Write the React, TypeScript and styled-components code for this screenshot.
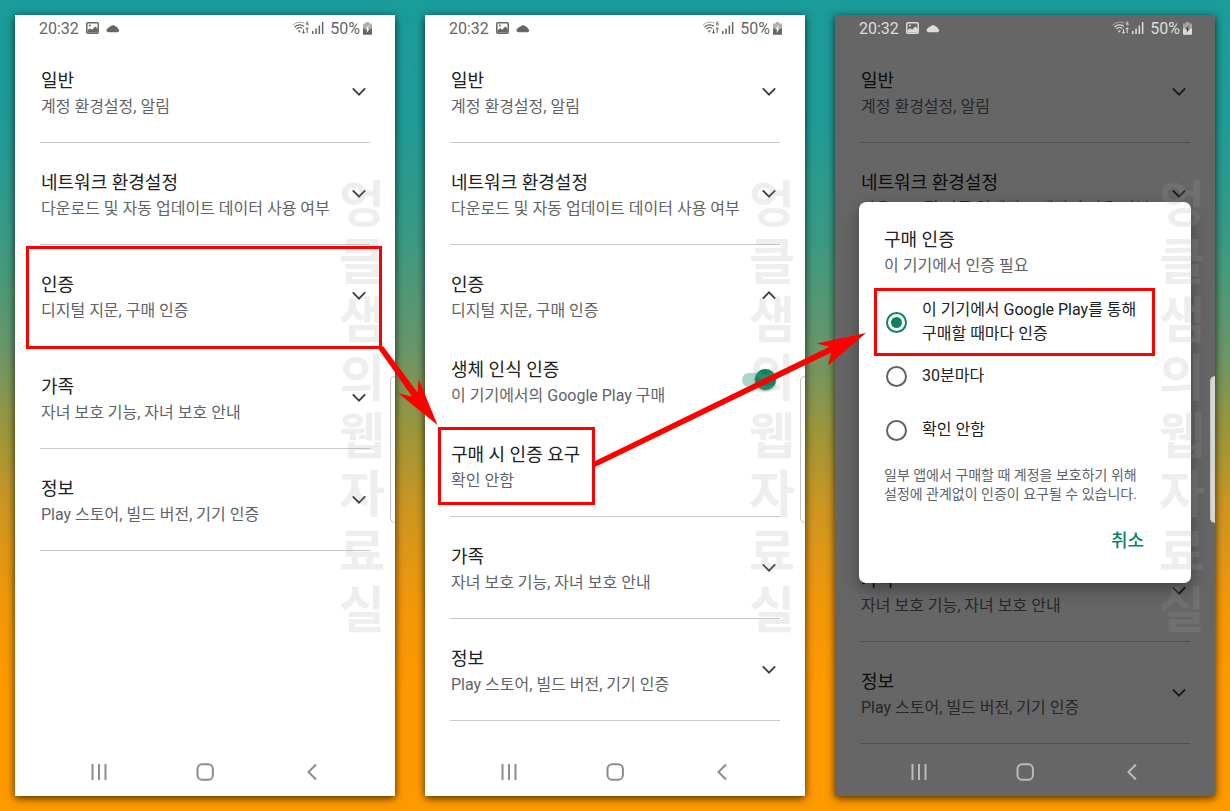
import React, { useState } from "react";
import styled, { createGlobalStyle, css } from "styled-components";

const GlobalStyle = createGlobalStyle`
  *, *::before, *::after { box-sizing: border-box; }
  body {
    margin: 0;
    font-family: Roboto, "Noto Sans CJK KR", sans-serif;
    color: #202124;
  }
  button {
    font: inherit;
    color: inherit;
    background: none;
    border: 0;
    padding: 0;
    text-align: left;
    cursor: pointer;
  }
`;

const Board = styled.main`
  display: grid;
  grid-template-columns: repeat(3, minmax(0, 1fr));
  gap: 30px;
  min-height: 100vh;
  padding: 15px;
  background: linear-gradient(
    #1a9c9b 0%,
    #1f9b98 15%,
    #3c9a82 30%,
    #69966a 43%,
    #9b963c 53%,
    #cb9623 62%,
    #f2970a 74%,
    #ff9900 85%
  );
`;

const Phone = styled.section`
  position: relative;
  display: flex;
  flex-direction: column;
  background: #fff;
  box-shadow: 0 2px 8px rgba(0, 0, 0, 0.75);
`;

const StatusBar = styled.header<{ $light?: boolean }>`
  position: relative;
  z-index: 3;
  display: flex;
  align-items: center;
  justify-content: space-between;
  height: 26px;
  padding: 0 23px 0 24px;
  font-size: 16px;
  color: ${(p) => (p.$light ? "#dcdcdc" : "#666")};
`;

const StatusGroup = styled.div<{ $gap: number }>`
  display: flex;
  align-items: center;
  gap: ${(p) => p.$gap}px;
`;

const List = styled.div`
  flex: 1;
  padding: 0 25px;
`;

const Section = styled.section`
  position: relative;
  padding: 27px 0 22px;
  border-bottom: 1px solid #c8c8c8;
`;

const CoveredSection = styled.div`
  height: 295px;
  border-bottom: 1px solid #c8c8c8;
`;

const row = css`
  display: flex;
  align-items: center;
  justify-content: space-between;
  width: 100%;
  padding-left: 1px;
`;

const SectionHeader = styled.button`
  ${row}
`;

const Item = styled.div`
  ${row}
  margin-top: 33px;
`;

const ItemLabel = styled.label`
  ${row}
  margin-top: 33px;
`;

const Texts = styled.span`
  position: relative;
  display: block;
`;

const Title = styled.span`
  display: block;
  font-size: 18px;
  line-height: 26px;
`;

const Sub = styled.span`
  display: block;
  padding: 1px 0;
  font-size: 16px;
  line-height: 24px;
  color: #5f6368;
`;

const Switch = styled.input`
  appearance: none;
  position: relative;
  flex: none;
  width: 34px;
  height: 14px;
  margin: 0 4px 6px 0;
  border-radius: 7px;
  background: #a9d6c8;

  &::after {
    content: "";
    position: absolute;
    top: -4px;
    right: 0;
    width: 21px;
    height: 21px;
    border-radius: 50%;
    background: #0b8461;
    box-shadow: 0 1px 3px rgba(0, 0, 0, 0.4);
  }
`;

const Frame = styled.span<{ $inset: string }>`
  position: absolute;
  z-index: 10;
  inset: ${(p) => p.$inset};
  border: 3px solid #f00;
  pointer-events: none;
`;

const ArrowDown = styled.svg`
  position: absolute;
  top: calc(100% + 3px);
  left: calc(100% + 3px);
  overflow: visible;
`;

const ArrowUp = styled.svg`
  position: absolute;
  bottom: 50%;
  left: calc(100% + 3px);
  overflow: visible;
`;

const NavBar = styled.nav<{ $light?: boolean }>`
  position: relative;
  z-index: 3;
  display: flex;
  height: 48px;
  padding: 0 31px;
  color: ${(p) => (p.$light ? "#bababa" : "#8c8c8c")};
`;

const NavButton = styled.button`
  flex: 1;
  display: flex;
  align-items: center;
  justify-content: center;
`;

const EdgeHandle = styled.span<{ $solid?: boolean }>`
  position: absolute;
  z-index: 3;
  top: 361px;
  right: 0;
  width: 5px;
  height: 147px;
  border: 1px solid #c4c4c4;
  border-right: 0;
  border-radius: 5px 0 0 5px;
  background: ${(p) => (p.$solid ? "#d6d6d6" : "#fff")};
`;

const Watermark = styled.div`
  position: absolute;
  z-index: 4;
  top: 156px;
  right: 8px;
  width: 50px;
  font-family: "Noto Sans CJK KR", sans-serif;
  font-size: 50px;
  font-weight: 700;
  line-height: 58px;
  text-align: center;
  word-break: break-all;
  color: rgba(158, 158, 158, 0.18);
  pointer-events: none;
`;

const Scrim = styled.div`
  position: absolute;
  z-index: 2;
  inset: 0;
  display: flex;
  align-items: center;
  padding: 0 24px 26px;
  background: rgba(0, 0, 0, 0.6);
`;

const Dialog = styled.form`
  flex: 1;
  padding: 25px 36px 25px 25px;
  border-radius: 7px;
  background: #fff;
  box-shadow: 0 6px 16px rgba(0, 0, 0, 0.35);
  word-break: keep-all;
`;

const Options = styled.fieldset`
  margin: 16px 0 0;
  padding: 0;
  border: 0;
`;

const Option = styled.label`
  position: relative;
  display: flex;
  align-items: center;
  gap: 15px;
  min-height: 54px;
  font-size: 16px;
  line-height: 24px;
`;

const Radio = styled.input`
  appearance: none;
  flex: none;
  display: grid;
  place-items: center;
  width: 21px;
  height: 21px;
  margin: 0 0 0 2px;
  border: 2px solid #5f6368;
  border-radius: 50%;

  &:checked {
    border-color: #0b8461;
  }
  &:checked::after {
    content: "";
    width: 11px;
    height: 11px;
    border-radius: 50%;
    background: #0b8461;
  }
`;

const Note = styled.p`
  margin: 9px 0 20px;
  font-size: 14px;
  line-height: 19px;
  color: #5f6368;
`;

const Actions = styled.div`
  display: flex;
  justify-content: flex-end;
  padding-right: 11px;
`;

const Cancel = styled.button`
  font-size: 18px;
  font-weight: 500;
  line-height: 34px;
  color: #0b8461;
`;

const Chevron = ({ up }: { up?: boolean }) => (
  <svg width="22" height="22" viewBox="0 0 22 22" fill="none" stroke="#3c4043" strokeWidth="1.9" aria-hidden="true">
    <path d={up ? "M4.8 11.6 11 5.4l6.2 6.2" : "M4.8 5.4 11 11.600l6.2-6.2"} />
  </svg>
);

const PictureIcon = () => (
  <svg width="13" height="12" viewBox="0 0 13 12" aria-hidden="true">
    <rect x="0.8" y="0.8" width="11.4" height="10.4" rx="1" fill="none" stroke="currentColor" strokeWidth="1.5" />
    <path d="M1.5 10.5V8.2l2.6-2 2 1.6 3.2-3.4 2.4 2.4v3.7z" fill="currentColor" />
    <circle cx="3.9" cy="3.6" r="1" fill="currentColor" />
  </svg>
);

const CloudIcon = () => (
  <svg width="14" height="9" viewBox="0 0 14 9" aria-hidden="true">
    <path d="M2.2 8.2A2 2 0 0 1 1.900 4.300 2.600 2.600 0 0 1 4 2.700 3.600 3.600 0 0 1 9.800 2.600 3.200 3.200 0 0 1 12 4.800a1.800 1.800 0 0 1-.1 3.400z" fill="currentColor" />
  </svg>
);

const WifiIcon = () => (
  <svg width="18" height="14" viewBox="0 0 18 14" fill="none" stroke="currentColor" aria-hidden="true">
    <path d="M.8 4.400C3.800.9 9 .2 12.600 2.300" strokeWidth="1" opacity=".6" />
    <path d="M2.600 6.200c2.400-2.700 6.600-3 9.400-.9" strokeWidth="1.300" />
    <path d="M4.400 8.100c1.500-1.700 4.200-1.900 6-.5" strokeWidth="1.300" />
    <path d="M5.700 9.600h3.200L7.300 11.800z" fill="currentColor" stroke="none" />
    <path d="M16.300.9h-1.600v3h1.600V2.500h-1.600" strokeWidth=".8" />
    <path d="M11.500 8.300v4M10.200 10.900l1.300 1.400 1.300-1.400M15.200 12V6.700M13.800 8.300l1.400-1.500 1.400 1.500" strokeWidth="1" />
  </svg>
);

const SignalIcon = () => (
  <svg width="12" height="12" viewBox="0 0 12 12" fill="currentColor" aria-hidden="true">
    <path d="M0 9h1.500v3H0zM3.300 6.500h1.500V12H3.300zM6.600 3.500h1.500V12H6.600zM9.900 0h1.500v12H9.900z" />
  </svg>
);

const BatteryIcon = ({ bolt }: { bolt: string }) => (
  <svg width="9" height="13" viewBox="0 0 9 13" fill="currentColor" aria-hidden="true">
    <path d="M2.800 0h3.400v1.500H9V7H0V1.500h2.800z" opacity=".5" />
    <path d="M0 6.500h9V12a.8.8 0 0 1-.8.8H.8A.8.8 0 0 1 0 12z" />
    <path d="M5.800 3.200 2.200 7.600h2L3.400 11l3.500-4.500h-2z" fill={bolt} />
  </svg>
);

const Status = ({ light }: { light?: boolean }) => (
  <StatusBar $light={light}>
    <StatusGroup $gap={7}>
      <span>20:32</span>
      <PictureIcon />
      <CloudIcon />
    </StatusGroup>
    <StatusGroup $gap={2}>
      <WifiIcon />
      <SignalIcon />
      <StatusGroup $gap={3}>
        <span>&nbsp;50%</span>
        <BatteryIcon bolt={light ? "#444" : "#fff"} />
      </StatusGroup>
    </StatusGroup>
  </StatusBar>
);

const Nav = ({ light }: { light?: boolean }) => (
  <NavBar $light={light}>
    <NavButton type="button" aria-label="최근 앱">
      <svg width="18" height="18" viewBox="0 0 18 18" stroke="currentColor" strokeWidth="2" aria-hidden="true">
        <path d="M2.500 1v16M9 1v16M15.500 1v16" />
      </svg>
    </NavButton>
    <NavButton type="button" aria-label="홈">
      <svg width="18" height="18" viewBox="0 0 18 18" fill="none" stroke="currentColor" strokeWidth="2" aria-hidden="true">
        <rect x="1.500" y="1.300" width="15.400" height="15.400" rx="4.500" />
      </svg>
    </NavButton>
    <NavButton type="button" aria-label="뒤로">
      <svg width="18" height="18" viewBox="0 0 18 18" fill="none" stroke="currentColor" strokeWidth="2" aria-hidden="true">
        <path d="M14 1.500 6.500 9l7.500 7.500" />
      </svg>
    </NavButton>
  </NavBar>
);

interface GroupProps {
  title: string;
  sub: string;
  open?: boolean;
  children?: React.ReactNode;
}

const Group = ({ title, sub, open, children }: GroupProps) => (
  <Section>
    <SectionHeader type="button" aria-expanded={!!open}>
      <Texts>
        <Title>{title}</Title>
        <Sub>{sub}</Sub>
      </Texts>
      <Chevron up={open} />
    </SectionHeader>
    {children}
  </Section>
);

const AuthItems = () => (
  <>
    <ItemLabel>
      <Texts>
        <Title>생체 인식 인증</Title>
        <Sub>이 기기에서의 Google Play 구매</Sub>
      </Texts>
      <Switch type="checkbox" role="switch" defaultChecked />
    </ItemLabel>
    <Item>
      <Texts as="button" type="button">
        <Title>구매 시 인증 요구</Title>
        <Sub>확인 안함</Sub>
        <Frame $inset="-15px -15px -11px -13px">
          <ArrowUp width="272" height="132" viewBox="0 0 272 132" fill="#f00" aria-hidden="true">
            <path d="M-2 128 234.500 12.700 221.500 9.500 271 -1 233 31.500 236.300 18.500-1 133.500z" />
          </ArrowUp>
        </Frame>
      </Texts>
    </Item>
  </>
);

const Phone1 = () => (
  <Phone>
    <Status />
    <List>
      <Group title="일반" sub="계정 환경설정, 알림" />
      <Group title="네트워크 환경설정" sub="다운로드 및 자동 업데이트 데이터 사용 여부" />
      <Group title="인증" sub="디지털 지문, 구매 인증">
        <Frame $inset="1px -12px -3px -14px">
          <ArrowDown width="56" height="77" viewBox="0 0 56 77" fill="#f00" aria-hidden="true">
            <path d="M-3.500 0 30 47.500 16.300 44.300 55.500 76 36.700 30 35.500 43.500 1-3z" />
          </ArrowDown>
        </Frame>
      </Group>
      <Group title="가족" sub="자녀 보호 기능, 자녀 보호 안내" />
      <Group title="정보" sub="Play 스토어, 빌드 버전, 기기 인증" />
    </List>
    <Nav />
    <EdgeHandle />
    <Watermark aria-hidden="true">엉클샘의웹자료실</Watermark>
  </Phone>
);

const Phone2 = () => (
  <Phone>
    <Status />
    <List>
      <Group title="일반" sub="계정 환경설정, 알림" />
      <Group title="네트워크 환경설정" sub="다운로드 및 자동 업데이트 데이터 사용 여부" />
      <Group title="인증" sub="디지털 지문, 구매 인증" open>
        <AuthItems />
      </Group>
      <Group title="가족" sub="자녀 보호 기능, 자녀 보호 안내" />
      <Group title="정보" sub="Play 스토어, 빌드 버전, 기기 인증" />
    </List>
    <Nav />
    <EdgeHandle />
    <Watermark aria-hidden="true">엉클샘의웹자료실</Watermark>
  </Phone>
);

const Phone3 = () => {
  const [choice, setChoice] = useState("always");
  const pick = (id: string) => ({
    type: "radio",
    name: "auth",
    checked: choice === id,
    onChange: () => setChoice(id),
  });
  return (
    <Phone>
      <Status light />
      <List>
        <Group title="일반" sub="계정 환경설정, 알림" />
        <Group title="네트워크 환경설정" sub="다운로드 및 자동 업데이트 데이터 사용 여부" />
        <CoveredSection />
        <Group title="가족" sub="자녀 보호 기능, 자녀 보호 안내" />
        <Group title="정보" sub="Play 스토어, 빌드 버전, 기기 인증" />
      </List>
      <Nav light />
      <Scrim>
        <Dialog role="dialog" aria-label="구매 인증">
          <Title>구매 인증</Title>
          <Sub>이 기기에서 인증 필요</Sub>
          <Options>
            <Option>
              <Radio {...pick("always")} />
              <span>이 기기에서 Google Play를 통해 구매할 때마다 인증</span>
              <Frame $inset="-7px 0 -7px -10px" />
            </Option>
            <Option>
              <Radio {...pick("30min")} />
              <span>30분마다</span>
            </Option>
            <Option>
              <Radio {...pick("never")} />
              <span>확인 안함</span>
            </Option>
          </Options>
          <Note>일부 앱에서 구매할 때 계정을 보호하기 위해 설정에 관계없이 인증이 요구될 수 있습니다.</Note>
          <Actions>
            <Cancel type="button">취소</Cancel>
          </Actions>
        </Dialog>
      </Scrim>
      <EdgeHandle $solid />
      <Watermark aria-hidden="true">엉클샘의웹자료실</Watermark>
    </Phone>
  );
};

export default function App() {
  return (
    <>
      <GlobalStyle />
      <Board>
        <Phone1 />
        <Phone2 />
        <Phone3 />
      </Board>
    </>
  );
}
